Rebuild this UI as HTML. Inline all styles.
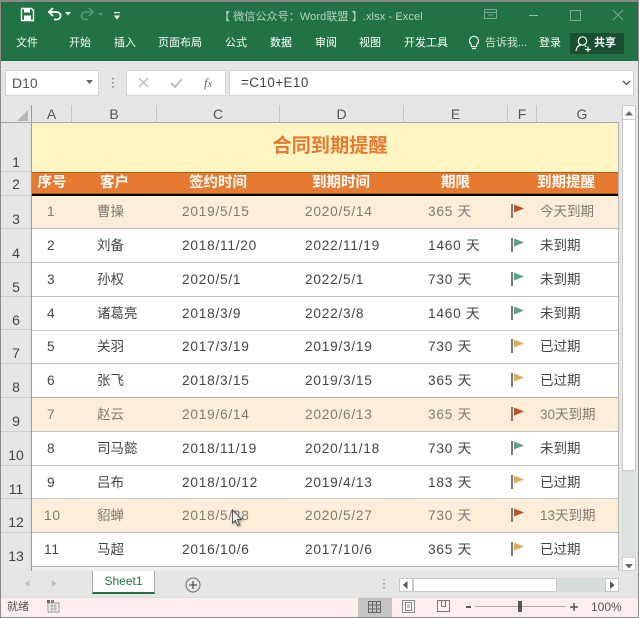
<!DOCTYPE html>
<html><head><meta charset="utf-8"><style>
html,body{margin:0;padding:0;background:#e6e6e6}
#p{position:relative;width:639px;height:618px;overflow:hidden;background:#e6e6e6;font-family:"Liberation Sans","Noto Sans CJK SC",sans-serif;color:#333}
#p div,#p span.a,#p svg{position:absolute}
.t{white-space:nowrap;line-height:16px;height:16px}
.m{font-size:11px;color:#fff;top:35px}
.c{font-size:13.7px;color:#444;white-space:nowrap;line-height:16px;margin-top:1px;letter-spacing:.75px}
#p .z{letter-spacing:0;font-size:13.5px}
.ch{top:105px;height:18px;line-height:19px;font-size:14px;color:#555;text-align:center;border-right:1px solid #c4c4c4;box-sizing:border-box}
.rh{left:1px;width:30px;text-align:center;font-size:14px;color:#444;line-height:16px;box-sizing:border-box;border-bottom:1px solid #cfcfcf}
.hd{top:174px;font-size:14.5px;font-weight:bold;color:#fff;text-align:center;line-height:18px}
</style></head><body><div id="p">
<!-- ribbon -->
<div style="left:0;top:0;width:639px;height:61px;background:#217346"></div>
<div style="left:0;top:0;width:639px;height:2px;background:#8a8a8a"></div>
<div style="left:0;top:0;width:1px;height:618px;background:#8a8a8a;z-index:5"></div>
<div style="left:638px;top:0;width:1px;height:618px;background:#8a8a8a;z-index:5"></div>
<div style="left:0;top:617px;width:639px;height:1px;background:#8a8a8a;z-index:5"></div>
<svg style="left:20px;top:7px" width="15" height="15" viewBox="0 0 15 15"><path d="M1.5 1.5H11.5L13.5 3.5V13.5H1.5Z" fill="none" stroke="#fff" stroke-width="1.4"/><rect x="4" y="2" width="6" height="3.5" fill="#fff"/><rect x="4" y="8.5" width="7" height="5" fill="#fff"/></svg>
<svg style="left:47px;top:7px" width="16" height="14" viewBox="0 0 16 14"><path d="M2 5H9.5C12 5 13.5 6.8 13.5 8.7C13.5 10.8 12 12.5 9.5 12.5H7" fill="none" stroke="#fff" stroke-width="1.8"/><path d="M6 1L2 5L6 9" fill="none" stroke="#fff" stroke-width="1.8"/></svg>
<svg style="left:65px;top:12px" width="7" height="4"><path d="M0 0H6L3 3.5Z" fill="#fff"/></svg>
<svg style="left:79px;top:7px" width="16" height="14" viewBox="0 0 16 14"><path d="M14 5H6.5C4 5 2.5 6.8 2.5 8.7C2.5 10.8 4 12.5 6.5 12.5H9" fill="none" stroke="#5c9474" stroke-width="1.6"/><path d="M10 1L14 5L10 9" fill="none" stroke="#5c9474" stroke-width="1.6"/></svg>
<svg style="left:98px;top:13px" width="6" height="3"><path d="M0 0H5L2.5 3Z" fill="#5c9474"/></svg>
<svg style="left:114px;top:12px" width="7" height="9"><rect y="0" width="6" height="1.2" fill="#fff"/><path d="M0 3.5H6L3 7.5Z" fill="#fff"/></svg>
<div class="t" style="left:219px;top:9px;font-size:11px;letter-spacing:.1px;color:#b9d2c3">【 微信公众号：Word联盟 】.xlsx - Excel</div>
<svg style="left:484px;top:9px" width="14" height="11"><rect x=".5" y=".5" width="12" height="9" fill="none" stroke="#7fa68f"/><path d="M0 3.5H13M4 6H9" stroke="#7fa68f"/></svg>
<div style="left:529px;top:15px;width:9px;height:1px;background:#9dbcaa"></div>
<div style="left:570px;top:10px;width:9px;height:9px;border:1px solid #7fa68f"></div>
<svg style="left:612px;top:9px" width="12" height="12"><path d="M1 1L11 11M11 1L1 11" stroke="#7fa68f" stroke-width="1"/></svg>
<div class="t m" style="left:16px">文件</div>
<div class="t m" style="left:69px">开始</div>
<div class="t m" style="left:114px">插入</div>
<div class="t m" style="left:158px">页面布局</div>
<div class="t m" style="left:225px">公式</div>
<div class="t m" style="left:270px">数据</div>
<div class="t m" style="left:315px">审阅</div>
<div class="t m" style="left:359px">视图</div>
<div class="t m" style="left:404px">开发工具</div>
<svg style="left:468px;top:35px" width="12" height="16" viewBox="0 0 12 16"><path d="M3.5 10C2.5 8.8 1.5 7.8 1.5 5.8A4.5 4.5 0 0 1 10.5 5.8C10.5 7.8 9.5 8.8 8.5 10V11.5H3.5Z" fill="none" stroke="#fff" stroke-width="1.1"/><path d="M4 13.5H8" stroke="#fff" stroke-width="1.3"/></svg>
<div class="t m" style="left:485px;color:#cfe0d6">告诉我...</div>
<div class="t m" style="left:539px">登录</div>
<div style="left:570px;top:33px;width:54px;height:21px;background:#174f30"></div>
<svg style="left:575px;top:35px" width="18" height="18" viewBox="0 0 18 18"><circle cx="7.5" cy="6" r="4.2" fill="none" stroke="#fff" stroke-width="1.2"/><path d="M1 16C1.5 12.5 3.5 10.5 5.5 10M10 10.5L11 12" fill="none" stroke="#fff" stroke-width="1.2"/><path d="M10 14.5H16M13 11.5V17" stroke="#fff" stroke-width="1.2"/></svg>
<div class="t m" style="left:594px;font-weight:bold">共享</div>

<!-- formula bar -->
<div style="left:5px;top:70px;width:92px;height:24px;background:#fff;border:1px solid #d4d4d4"></div>
<div class="t" style="left:12px;top:75px;font-size:14px;color:#555">D10</div>
<svg style="left:86px;top:80px" width="8" height="5"><path d="M0 0H7L3.5 4Z" fill="#666"/></svg>
<div style="left:112px;top:78px;width:2px;height:10px;background:repeating-linear-gradient(#999 0 1.5px,transparent 1.5px 4px)"></div>
<div style="left:126px;top:70px;width:98px;height:24px;background:#fff;border:1px solid #d4d4d4"></div>
<svg style="left:138px;top:77px" width="11" height="11"><path d="M1 1L10 10M10 1L1 10" stroke="#bdbdbd" stroke-width="1.5"/></svg>
<svg style="left:169px;top:77px" width="15" height="12"><path d="M2 6L6 10L13 2" fill="none" stroke="#bdbdbd" stroke-width="2"/></svg>
<div class="t" style="left:204px;top:75px;font:italic 13px/16px 'Liberation Serif',serif;color:#666">f<span style="font-size:10px">x</span></div>
<div style="left:229px;top:70px;width:403px;height:24px;background:#fff;border:1px solid #d4d4d4"></div>
<div class="t" style="left:241px;top:75px;font-size:13.5px;letter-spacing:.4px;color:#444">=C10+E10</div>
<svg style="left:622px;top:80px" width="9" height="6"><path d="M1 1L4.5 4.5L8 1" fill="none" stroke="#555" stroke-width="1.3"/></svg>

<!-- col headers -->
<svg style="left:16px;top:109px" width="13" height="13"><path d="M12 1V12H1Z" fill="#b5b5b5"/></svg>
<div style="left:31px;top:105px;width:1px;height:466px;background:#9a9a9a"></div>
<div class="ch" style="left:32px;width:40px">A</div>
<div class="ch" style="left:72px;width:85px">B</div>
<div class="ch" style="left:157px;width:123px">C</div>
<div class="ch" style="left:280px;width:124px">D</div>
<div class="ch" style="left:404px;width:104px">E</div>
<div class="ch" style="left:508px;width:29px">F</div>
<div class="ch" style="left:537px;width:90px;border-right:0">G</div>
<div style="left:0;top:122px;width:619px;height:1px;background:#a8a8a8"></div>
<div style="left:618px;top:122px;width:1px;height:449px;background:#b4b4b4"></div>

<!-- sheet -->
<div style="left:32px;top:123px;width:586px;height:49px;background:#fff4c4"></div>
<div style="left:37px;top:123px;width:586px;height:49px;line-height:47px;text-align:center;font-size:19.2px;font-weight:bold;color:#e67a30">合同到期提醒</div>
<div style="left:32px;top:172px;width:586px;height:21px;background:#e67a30;border-top:1px solid #b06010;box-sizing:border-box"></div>
<div style="left:32px;top:193px;width:586px;height:1px;background:#a85a10"></div>
<div style="left:32px;top:194px;width:586px;height:2px;background:#000"></div>
<div class="hd" style="left:32px;width:40px">序号</div>
<div class="hd" style="left:72px;width:85px">客户</div>
<div class="hd" style="left:157px;width:122px">签约时间</div>
<div class="hd" style="left:279px;width:124px">到期时间</div>
<div class="hd" style="left:404px;width:103px">期限</div>
<div class="hd" style="left:537px;width:58px">到期提醒</div>

<!-- row headers -->
<div class="rh" style="top:123px;height:49px;padding-top:31px">1</div>
<div class="rh" style="top:172px;height:24px;padding-top:4px">2</div>
<div class="rh" style="top:196px;height:33px;padding-top:15px">3</div>
<div class="rh" style="top:229px;height:34px;padding-top:16px">4</div>
<div class="rh" style="top:263px;height:34px;padding-top:16px">5</div>
<div class="rh" style="top:297px;height:33px;padding-top:15px">6</div>
<div class="rh" style="top:330px;height:34px;padding-top:15px">7</div>
<div class="rh" style="top:364px;height:34px;padding-top:15px">8</div>
<div class="rh" style="top:398px;height:34px;padding-top:15px">9</div>
<div class="rh" style="top:432px;height:34px;padding-top:15px">10</div>
<div class="rh" style="top:466px;height:33px;padding-top:15px">11</div>
<div class="rh" style="top:499px;height:34px;padding-top:15px">12</div>
<div class="rh" style="top:533px;height:38px;padding-top:15px;border-bottom:0">13</div>

<!-- row backgrounds & lines -->
<div style="left:32px;top:196px;width:586px;height:32px;background:#fdeed9"></div>
<div style="left:32px;top:229px;width:586px;height:169px;background:#fff"></div>
<div style="left:32px;top:398px;width:586px;height:33px;background:#fdeed9"></div>
<div style="left:32px;top:432px;width:586px;height:67px;background:#fff"></div>
<div style="left:32px;top:499px;width:586px;height:33px;background:#fdeed9"></div>
<div style="left:32px;top:533px;width:586px;height:33px;background:#fff"></div>
<div style="left:32px;top:566px;width:586px;height:5px;background:#eeeeee"></div>
<div style="left:32px;top:228px;width:586px;height:1px;background:#b9b9b9"></div>
<div style="left:32px;top:262px;width:586px;height:1px;background:#c2c2c2"></div>
<div style="left:32px;top:296px;width:586px;height:1px;background:#c4c4cc"></div>
<div style="left:32px;top:330px;width:586px;height:1px;background:#c8cccc"></div>
<div style="left:32px;top:363px;width:586px;height:1px;background:#bdbdbd"></div>
<div style="left:32px;top:397px;width:586px;height:1px;background:#aeaeae"></div>
<div style="left:32px;top:431px;width:586px;height:1px;background:#c2c2c2"></div>
<div style="left:32px;top:465px;width:586px;height:1px;background:#c2c2c2"></div>
<div style="left:32px;top:498px;width:586px;height:1px;background:#c8c8d0"></div>
<div style="left:32px;top:532px;width:586px;height:1px;background:#b8b8b8"></div>
<div style="left:32px;top:566px;width:586px;height:1px;background:#bcbcbc"></div>

<!-- R3 -->
<div class="c" style="left:47px;top:203px;color:#7f7a72">1</div><div class="c z" style="left:97px;top:203px;color:#7f7a72">曹操</div><div class="c" style="left:182px;top:203px;color:#7f7a72">2019/5/15</div><div class="c" style="left:305px;top:203px;color:#7f7a72">2020/5/14</div><div class="c" style="left:428px;top:203px;color:#7f7a72">365 天</div><div class="c z" style="left:540px;top:203px;color:#7f7a72">今天到期</div>
<!-- R4 -->
<div class="c" style="left:47px;top:237px">2</div><div class="c z" style="left:97px;top:237px">刘备</div><div class="c" style="left:182px;top:237px">2018/11/20</div><div class="c" style="left:305px;top:237px">2022/11/19</div><div class="c" style="left:428px;top:237px">1460 天</div><div class="c z" style="left:540px;top:237px">未到期</div>
<!-- R5 -->
<div class="c" style="left:47px;top:271px">3</div><div class="c z" style="left:97px;top:271px">孙权</div><div class="c" style="left:182px;top:271px">2020/5/1</div><div class="c" style="left:305px;top:271px">2022/5/1</div><div class="c" style="left:428px;top:271px">730 天</div><div class="c z" style="left:540px;top:271px">未到期</div>
<!-- R6 -->
<div class="c" style="left:47px;top:305px">4</div><div class="c z" style="left:97px;top:305px">诸葛亮</div><div class="c" style="left:182px;top:305px">2018/3/9</div><div class="c" style="left:305px;top:305px">2022/3/8</div><div class="c" style="left:428px;top:305px">1460 天</div><div class="c z" style="left:540px;top:305px">未到期</div>
<!-- R7 -->
<div class="c" style="left:47px;top:338px">5</div><div class="c z" style="left:97px;top:338px">关羽</div><div class="c" style="left:182px;top:338px">2017/3/19</div><div class="c" style="left:305px;top:338px">2019/3/19</div><div class="c" style="left:428px;top:338px">730 天</div><div class="c z" style="left:540px;top:338px">已过期</div>
<!-- R8 -->
<div class="c" style="left:47px;top:372px">6</div><div class="c z" style="left:97px;top:372px">张飞</div><div class="c" style="left:182px;top:372px">2018/3/15</div><div class="c" style="left:305px;top:372px">2019/3/15</div><div class="c" style="left:428px;top:372px">365 天</div><div class="c z" style="left:540px;top:372px">已过期</div>
<!-- R9 -->
<div class="c" style="left:47px;top:406px;color:#7f7a72">7</div><div class="c z" style="left:97px;top:406px;color:#7f7a72">赵云</div><div class="c" style="left:182px;top:406px;color:#7f7a72">2019/6/14</div><div class="c" style="left:305px;top:406px;color:#7f7a72">2020/6/13</div><div class="c" style="left:428px;top:406px;color:#7f7a72">365 天</div><div class="c z" style="left:540px;top:406px;color:#7f7a72">30天到期</div>
<!-- R10 -->
<div class="c" style="left:47px;top:440px">8</div><div class="c z" style="left:97px;top:440px">司马懿</div><div class="c" style="left:182px;top:440px">2018/11/19</div><div class="c" style="left:305px;top:440px">2020/11/18</div><div class="c" style="left:428px;top:440px">730 天</div><div class="c z" style="left:540px;top:440px">未到期</div>
<!-- R11 -->
<div class="c" style="left:47px;top:474px">9</div><div class="c z" style="left:97px;top:474px">吕布</div><div class="c" style="left:182px;top:474px">2018/10/12</div><div class="c" style="left:305px;top:474px">2019/4/13</div><div class="c" style="left:428px;top:474px">183 天</div><div class="c z" style="left:540px;top:474px">已过期</div>
<!-- R12 -->
<div class="c" style="left:44px;top:507px;color:#7f7a72">10</div><div class="c z" style="left:97px;top:507px;color:#7f7a72">貂蝉</div><div class="c" style="left:182px;top:507px;color:#7f7a72">2018/5/28</div><div class="c" style="left:305px;top:507px;color:#7f7a72">2020/5/27</div><div class="c" style="left:428px;top:507px;color:#7f7a72">730 天</div><div class="c z" style="left:540px;top:507px;color:#7f7a72">13天到期</div>
<!-- R13 -->
<div class="c" style="left:44px;top:541px">11</div><div class="c z" style="left:97px;top:541px">马超</div><div class="c" style="left:182px;top:541px">2016/10/6</div><div class="c" style="left:305px;top:541px">2017/10/6</div><div class="c" style="left:428px;top:541px">365 天</div><div class="c z" style="left:540px;top:541px">已过期</div>

<!-- flags -->
<svg style="left:511px;top:204px" width="14" height="15"><rect width="2" height="14" fill="#7a7a7a"/><path d="M3 0.5L13 4.5L3 8.5Z" fill="#b5532a"/></svg>
<svg style="left:511px;top:238px" width="14" height="15"><rect width="2" height="14" fill="#7a7a7a"/><path d="M3 0.5L13 4.5L3 8.5Z" fill="#5f9e8f"/></svg>
<svg style="left:511px;top:272px" width="14" height="15"><rect width="2" height="14" fill="#7a7a7a"/><path d="M3 0.5L13 4.5L3 8.5Z" fill="#5f9e8f"/></svg>
<svg style="left:511px;top:306px" width="14" height="15"><rect width="2" height="14" fill="#7a7a7a"/><path d="M3 0.5L13 4.5L3 8.5Z" fill="#5f9e8f"/></svg>
<svg style="left:511px;top:339px" width="14" height="15"><rect width="2" height="14" fill="#7a7a7a"/><path d="M3 0.5L13 4.5L3 8.5Z" fill="#e0aa5c"/></svg>
<svg style="left:511px;top:373px" width="14" height="15"><rect width="2" height="14" fill="#7a7a7a"/><path d="M3 0.5L13 4.5L3 8.5Z" fill="#e0aa5c"/></svg>
<svg style="left:511px;top:407px" width="14" height="15"><rect width="2" height="14" fill="#7a7a7a"/><path d="M3 0.5L13 4.5L3 8.5Z" fill="#b5532a"/></svg>
<svg style="left:511px;top:441px" width="14" height="15"><rect width="2" height="14" fill="#7a7a7a"/><path d="M3 0.5L13 4.5L3 8.5Z" fill="#5f9e8f"/></svg>
<svg style="left:511px;top:475px" width="14" height="15"><rect width="2" height="14" fill="#7a7a7a"/><path d="M3 0.5L13 4.5L3 8.5Z" fill="#e0aa5c"/></svg>
<svg style="left:511px;top:508px" width="14" height="15"><rect width="2" height="14" fill="#7a7a7a"/><path d="M3 0.5L13 4.5L3 8.5Z" fill="#b5532a"/></svg>
<svg style="left:511px;top:542px" width="14" height="15"><rect width="2" height="14" fill="#7a7a7a"/><path d="M3 0.5L13 4.5L3 8.5Z" fill="#e0aa5c"/></svg>

<!-- cursor -->
<svg style="left:231px;top:509px;filter:drop-shadow(1px 1px 1px rgba(0,0,0,.4))" width="16" height="20" viewBox="0 0 16 20"><path d="M1.5 1V14L4.5 11.5L6.5 16.5L8.5 15.5L6.5 10.5H10.5Z" fill="#eee" stroke="#555" stroke-width="1"/></svg>

<!-- vertical scrollbar -->
<div style="left:622px;top:105px;width:14px;height:466px;background:#dce0e0"></div>
<div style="left:622px;top:105px;width:14px;height:366px;background:#fff;border:1px solid #c8c8cc;box-sizing:border-box"></div>
<div style="left:622px;top:557px;width:14px;height:14px;background:#fff;border:1px solid #d0d0d0;box-sizing:border-box"></div>
<div style="left:622px;top:105px;width:14px;height:15px;background:#fff;border:1px solid #c8c8cc;box-sizing:border-box"></div>
<svg style="left:625px;top:111px" width="9" height="5"><path d="M0 4.5H8L4 0Z" fill="#666"/></svg>
<svg style="left:625px;top:564px" width="9" height="5"><path d="M0 0H8L4 4.5Z" fill="#666"/></svg>

<!-- tabs -->
<div style="left:0;top:571px;width:639px;height:26px;background:#e6e6e6"></div>
<svg style="left:25px;top:580px" width="5" height="8"><path d="M4.5 0V7L0 3.5Z" fill="#c0c0c0"/></svg>
<svg style="left:52px;top:580px" width="5" height="8"><path d="M0 0V7L4.5 3.5Z" fill="#c0c0c0"/></svg>
<div style="left:92px;top:571px;width:63px;height:23px;background:#fff;border-left:1px solid #aaa;border-right:1px solid #aaa;border-bottom:2px solid #217346;box-sizing:border-box;text-align:center;font-size:12px;line-height:21px;color:#217346">Sheet1</div>
<svg style="left:185px;top:577px" width="16" height="16"><circle cx="8" cy="8" r="7" fill="none" stroke="#777" stroke-width="1.1"/><path d="M4 8H12M8 4V12" stroke="#555" stroke-width="1.3"/></svg>
<div style="left:383px;top:579px;width:2px;height:11px;background:repeating-linear-gradient(#aaa 0 1.5px,transparent 1.5px 4px)"></div>
<div style="left:399px;top:578px;width:220px;height:14px;background:#d6dedd"></div>
<div style="left:399px;top:578px;width:14px;height:14px;background:#fff;border:1px solid #c8c8c8;box-sizing:border-box"></div>
<div style="left:413px;top:578px;width:144px;height:14px;background:#fff;border:1px solid #c8c8c8;box-sizing:border-box"></div>
<div style="left:605px;top:578px;width:14px;height:14px;background:#fff;border:1px solid #c8c8c8;box-sizing:border-box"></div>
<svg style="left:403px;top:581px" width="5" height="8"><path d="M4.5 0V8L0 4Z" fill="#555"/></svg>
<svg style="left:610px;top:581px" width="5" height="8"><path d="M0 0V8L4.5 4Z" fill="#555"/></svg>

<!-- status bar -->
<div style="left:0;top:597px;width:639px;height:21px;background:#ffeeee;border-top:1px solid #ddd;box-sizing:border-box"></div>
<div class="t" style="left:7px;top:599px;font-size:11px;color:#555">就绪</div>
<svg style="left:47px;top:600px" width="13" height="13"><rect x="1" y="3" width="11" height="9" fill="#f4f4f4" stroke="#999"/><path d="M3 6H10M3 9H10M5 4V11M8 4V11" stroke="#aaa"/><rect x="0" y="0" width="3" height="3" fill="#666"/><rect x="4" y="0" width="3" height="3" fill="#888"/></svg>
<div style="left:358px;top:598px;width:34px;height:19px;background:#c4c4c4"></div>
<svg style="left:368px;top:601px" width="14" height="13"><path d="M.5.5H12.5V11.5H.5ZM.5 4H12.5M.5 8H12.5M4.5.5V11.5M8.5.5V11.5" fill="none" stroke="#666"/></svg>
<svg style="left:402px;top:600px" width="14" height="14"><rect x=".5" y=".5" width="12" height="12" fill="#f5f5f5" stroke="#888"/><rect x="3.5" y="2.5" width="6" height="8" fill="#fff" stroke="#888"/><path d="M5 5H8M5 7H8" stroke="#888"/></svg>
<svg style="left:437px;top:600px" width="14" height="14"><path d="M.5.5H12.5V11.5H.5ZM.5 0V11.5M4.5.5V6.5H8.5V.5" fill="none" stroke="#777"/></svg>
<div style="left:466px;top:606px;width:5px;height:2px;background:#555"></div>
<div style="left:475px;top:606px;width:91px;height:1px;background:#aaa"></div>
<div style="left:518px;top:601px;width:4px;height:11px;background:#555"></div>
<svg style="left:569px;top:602px" width="10" height="10"><path d="M1 5H9M5 1V9" stroke="#555" stroke-width="1.5"/></svg>
<div class="t" style="left:591px;top:599px;font-size:12px;color:#555">100%</div>
</div></body></html>
